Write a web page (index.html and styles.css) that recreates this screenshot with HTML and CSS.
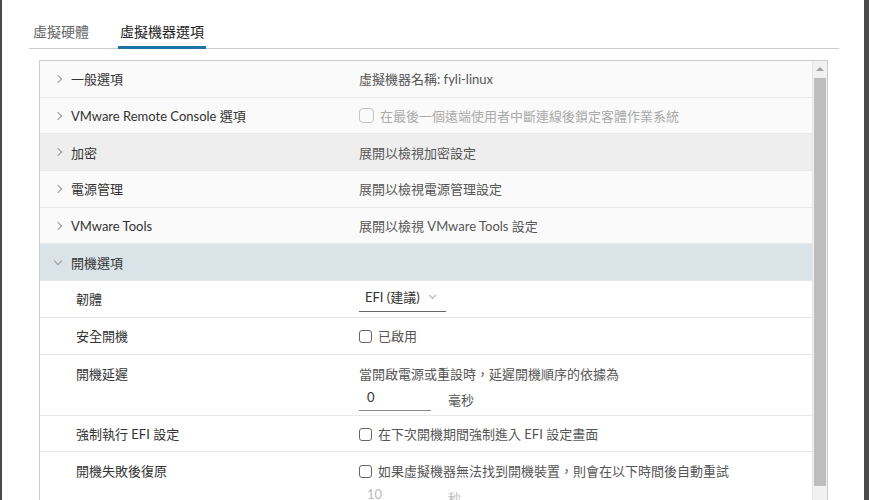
FILE: index.html
```html
<!DOCTYPE html>
<html lang="zh-Hant">

<head>
    <meta charset="UTF-8">
    <meta name="viewport" content="width=device-width, initial-scale=1.0">
    <title>編輯設定</title>
    <link rel="stylesheet" href="styles.css">
</head>

<body>
    <div class="screen">
        <div class="edge edge-left"></div>
        <div class="modal">
            <!-- 頁籤 -->
            <div class="tabs">
                <div class="tab">虛擬硬體</div>
                <div class="tab active">虛擬機器選項</div>
            </div>

            <div class="panel">
                <div class="rows">
                    <div class="row head">
                        <div class="label"><span class="chev"></span>一般選項</div>
                        <div class="value">虛擬機器名稱: fyli-linux</div>
                    </div>
                    <div class="row head">
                        <div class="label"><span class="chev"></span>VMware Remote Console 選項</div>
                        <div class="value muted"><span class="check disabled"></span>在最後一個遠端使用者中斷連線後鎖定客體作業系統</div>
                    </div>
                    <div class="row head hover">
                        <div class="label"><span class="chev"></span>加密</div>
                        <div class="value">展開以檢視加密設定</div>
                    </div>
                    <div class="row head">
                        <div class="label"><span class="chev"></span>電源管理</div>
                        <div class="value">展開以檢視電源管理設定</div>
                    </div>
                    <div class="row head">
                        <div class="label"><span class="chev"></span>VMware Tools</div>
                        <div class="value">展開以檢視 VMware Tools 設定</div>
                    </div>
                    <div class="row head open">
                        <div class="label"><span class="chev down"></span>開機選項</div>
                        <div class="value"></div>
                    </div>

                    <div class="row sub">
                        <div class="label">韌體</div>
                        <div class="value">
                            <div class="select">EFI (建議)<span class="caret"></span></div>
                        </div>
                    </div>
                    <div class="row sub">
                        <div class="label">安全開機</div>
                        <div class="value"><span class="check"></span>已啟用</div>
                    </div>
                    <div class="row sub tall">
                        <div class="label">開機延遲</div>
                        <div class="value">
                            <div>當開啟電源或重設時，延遲開機順序的依據為</div>
                            <div class="field-line">
                                <div class="input">0</div>
                                <span>毫秒</span>
                            </div>
                        </div>
                    </div>
                    <div class="row sub">
                        <div class="label">強制執行 EFI 設定</div>
                        <div class="value"><span class="check"></span>在下次開機期間強制進入 EFI 設定畫面</div>
                    </div>
                    <div class="row sub tall">
                        <div class="label">開機失敗後復原</div>
                        <div class="value">
                            <div><span class="check"></span>如果虛擬機器無法找到開機裝置，則會在以下時間後自動重試</div>
                            <div class="field-line faded">
                                <div class="input">10</div>
                                <span>秒</span>
                            </div>
                        </div>
                    </div>
                </div>

                <!-- 捲軸 -->
                <div class="scrollbar">
                    <div class="arrow"></div>
                    <div class="thumb"></div>
                </div>
            </div>
        </div>
        <div class="edge edge-right"></div>
    </div>
</body>

</html>
```

FILE: styles.css
```css
*,
*:before,
*:after {
    box-sizing: border-box;
}

html,
body {
    margin: 0;
    height: 100%;
    overflow: hidden;
}

body {
    font-family: Lato, "Noto Sans CJK TC", sans-serif;
    font-size: 13px;
    color: #333;
    background: #fff;
}

.screen {
    display: flex;
    height: 500px;
}

.edge {
    background: #4a4a4a;
}

.edge-left {
    width: 2px;
}

.edge-right {
    width: 5px;
}

.modal {
    flex: 1;
    background: #fff;
    padding: 0 25px 0 27px;
}

/* 頁籤 */

.tabs {
    display: flex;
    gap: 27px;
    margin-top: 23px;
    padding-left: 2px;
    border-bottom: 1px solid #ccc;
    font-size: 14px;
}

.tab {
    color: #666;
    padding: 0 2px 7px;
    line-height: 18px;
}

.tab.active {
    color: #222;
    box-shadow: inset 0 -3px 0 #1b75a8;
    margin-bottom: -1px;
    padding-bottom: 8px;
}

/* 面板 */

.panel {
    display: flex;
    margin: 11px 11px 0 10px;
    border: 1px solid #ccc;
    border-bottom: 0;
    height: 460px;
}

.rows {
    flex: 1;
    overflow: hidden;
}

.row {
    display: grid;
    grid-template-columns: 319px 1fr;
    align-items: center;
    height: 36.7px;
    border-bottom: 1px solid #e8e8e8;
}

.row.head {
    background: #fafafa;
}

.row.hover {
    background: #eeeeee;
}

.row.open {
    background: #dae3e7;
}

.row.sub {
    background: #fff;
}

.row.tall {
    height: 61px;
    align-items: start;
    padding-top: 9px;
}

.label {
    display: flex;
    align-items: center;
    padding-left: 15px;
}

.row.sub .label {
    padding-left: 36px;
}

.value {
    color: #565656;
    display: flex;
    flex-direction: column;
    align-items: flex-start;
}

.value.muted {
    flex-direction: row;
    align-items: center;
    color: #aaa;
}

.row.sub .value {
    display: block;
}

.chev {
    width: 6px;
    height: 6px;
    border-top: 1px solid #999;
    border-right: 1px solid #999;
    transform: rotate(45deg);
    margin-right: 10px;
}

.chev.down {
    transform: rotate(135deg);
    margin-top: -3px;
}

.check {
    display: inline-block;
    vertical-align: -2px;
    width: 13px;
    height: 13px;
    border: 1px solid #666;
    border-radius: 3px;
    margin-right: 6px;
}

.check.disabled {
    width: 15px;
    height: 15px;
    border-color: #c4c4c4;
    border-radius: 4px;
}

.select {
    display: inline-flex;
    align-items: center;
    width: 87px;
    padding: 0 0 5px 6px;
    border-bottom: 1px solid #666;
    color: #333;
    margin-top: 2px;
}

.caret {
    width: 5px;
    height: 5px;
    border-right: 1px solid #aaa;
    border-bottom: 1px solid #aaa;
    transform: rotate(45deg);
    margin: -3px 0 0 10px;
}

.field-line {
    display: flex;
    align-items: center;
    gap: 17px;
    margin-top: 6px;
}

.input {
    width: 72px;
    padding: 0 0 5px 8px;
    border-bottom: 1px solid #888;
    color: #333;
}

.faded {
    color: #bbb;
}

.faded .input {
    color: #bbb;
}

/* 捲軸 */

.scrollbar {
    width: 15px;
    background: #f1f1f1;
    border-left: 1px solid #e4e4e4;
}

.arrow {
    height: 17px;
    position: relative;
}

.arrow:after {
    content: '';
    position: absolute;
    left: 3px;
    top: 6px;
    border-left: 4px solid transparent;
    border-right: 4px solid transparent;
    border-bottom: 4px solid #a3a3a3;
}

.thumb {
    margin: 0 1px;
    height: 408px;
    background: #bdbdbd;
}
```
